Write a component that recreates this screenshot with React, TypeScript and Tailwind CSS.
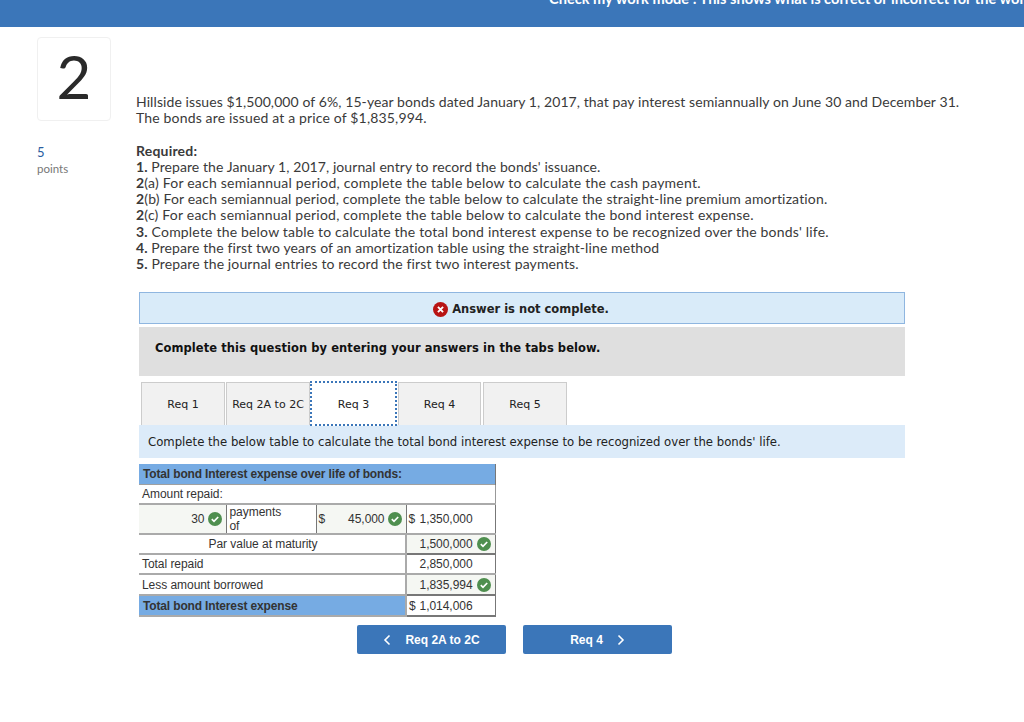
const body = "font-['Lato','Noto_Sans',sans-serif]";
const verdana = "font-['DejaVu_Sans',sans-serif]";
const arial = "font-['Liberation_Sans',Arial,sans-serif]";

const requirements = [
  { lead: "1.", text: " Prepare the January 1, 2017, journal entry to record the bonds' issuance.", track: "tracking-[0.08px]" },
  { lead: "2", text: "(a) For each semiannual period, complete the table below to calculate the cash payment.", track: "tracking-[0.22px]" },
  { lead: "2", text: "(b) For each semiannual period, complete the table below to calculate the straight-line premium amortization.", track: "tracking-[0.16px]" },
  { lead: "2", text: "(c) For each semiannual period, complete the table below to calculate the bond interest expense.", track: "tracking-[0.22px]" },
  { lead: "3.", text: " Complete the below table to calculate the total bond interest expense to be recognized over the bonds' life.", track: "tracking-[0.19px]" },
  { lead: "4.", text: " Prepare the first two years of an amortization table using the straight-line method", track: "tracking-[0.1px]" },
  { lead: "5.", text: " Prepare the journal entries to record the first two interest payments.", track: "tracking-[0.13px]" },
];

function Check() {
  return (
    <svg viewBox="0 0 14 14" className="inline-block w-[14px] h-[14px] shrink-0">
      <circle cx="7" cy="7" r="7" fill="#4f8f4f" />
      <path d="M3.8 7.2 L6 9.3 L10.2 5" fill="none" stroke="#fff" strokeWidth="1.7" />
    </svg>
  );
}

function Cross() {
  return (
    <svg viewBox="0 0 14 14" className="w-[15px] h-[15px] shrink-0">
      <circle cx="7" cy="7" r="7" fill="#b81414" />
      <path d="M4.6 4.6 L9.4 9.4 M9.4 4.6 L4.6 9.4" fill="none" stroke="#fff" strokeWidth="1.8" />
    </svg>
  );
}

function Chevron({ left }: { left?: boolean }) {
  return (
    <svg viewBox="0 0 8 12" className="w-[8px] h-[12px]">
      <path d={left ? "M6.5 1.5 L2 6 L6.5 10.5" : "M1.5 1.5 L6 6 L1.5 10.5"} fill="none" stroke="#fff" strokeWidth="1.6" />
    </svg>
  );
}

function BondTable() {
  return (
    <table className={`w-[356px] table-fixed border-collapse text-[12px] leading-[14px] tracking-[-0.05px] text-[#333] ${arial}`}>
      <colgroup>
        <col className="w-[87px]" />
        <col className="w-[90px]" />
        <col className="w-[90px]" />
        <col className="w-[89px]" />
      </colgroup>
      <tbody>
        <tr className="h-[20px] bg-[#76abe3] font-bold tracking-[-0.15px] border-b border-[#a0a0a0]">
          <td colSpan={4} className="px-1 border-r border-[#777]">Total bond Interest expense over life of bonds:</td>
        </tr>
        <tr className="h-[20px] border-b-2 border-[#aaa]">
          <td colSpan={4} className="px-[3px] border-r border-[#999]">Amount repaid:</td>
        </tr>
        <tr className="h-[30px] border-b-2 border-[#aaa]">
          <td className="bg-[#f5f7f3] border-r border-[#777] text-right pr-[4px]">
            <span className="inline-flex items-center gap-[3px]">30 <Check /></span>
          </td>
          <td className="bg-white border-r border-[#777] px-[3px]">payments<br />of</td>
          <td className="bg-[#f5f7f3] border-r border-[#777] pl-[2px]">
            <div className="flex items-center justify-between pr-[4px]">
              <span>$</span>
              <span className="inline-flex items-center gap-[3px]">45,000 <Check /></span>
            </div>
          </td>
          <td className="border-r border-[#777] pl-[2px]">
            <div className="flex justify-between pr-[22px]"><span>$</span><span>1,350,000</span></div>
          </td>
        </tr>
        <tr className="h-[20px] border-b-2 border-[#aaa]">
          <td colSpan={3} className="text-center pr-[18px] border-r-2 border-[#aaa]">Par value at maturity</td>
          <td className="bg-[#f5f7f3] border-b-2 border-[#222] border-r border-[#777] text-right pr-[4px]">
            <span className="inline-flex items-center gap-[4px]">1,500,000 <Check /></span>
          </td>
        </tr>
        <tr className="h-[20px] border-b-2 border-[#aaa]">
          <td colSpan={3} className="px-[3px] border-r-2 border-[#aaa]">Total repaid</td>
          <td className="border-r border-[#777] text-right pr-[22px]">2,850,000</td>
        </tr>
        <tr className="h-[21px] border-b-2 border-[#aaa]">
          <td colSpan={3} className="px-[3px] border-r-2 border-[#aaa]">Less amount borrowed</td>
          <td className="bg-[#f5f7f3] border-b-2 border-[#222] border-r border-[#777] text-right pr-[4px]">
            <span className="inline-flex items-center gap-[4px]">1,835,994 <Check /></span>
          </td>
        </tr>
        <tr className="h-[21px] border-b-2 border-[#aaa]">
          <td colSpan={3} className="bg-[#76abe3] font-bold tracking-[-0.15px] px-1 border-r-2 border-[#aaa]">Total bond Interest expense</td>
          <td className="border-b-2 border-[#222] border-r border-[#777] pl-[2px]">
            <div className="flex justify-between pr-[22px]"><span>$</span><span>1,014,006</span></div>
          </td>
        </tr>
      </tbody>
    </table>
  );
}

export default function App() {
  const tabBase = "bg-[#f1f1f1] border border-b-0 border-[#ccc] pt-[3px] flex items-center justify-center text-[11px] text-[#222] whitespace-nowrap";
  return (
    <div className={`w-[1024px] h-[722px] overflow-hidden bg-white text-[#3a3a3a] ${body}`}>
      <div className="h-[27px] bg-[#3b76b9] overflow-hidden pl-[549px]">
        <div className="-mt-[10px] whitespace-nowrap text-[14.6px] leading-[17px] font-bold text-white">
          Check my work mode : This shows what is correct or incorrect for the work you have completed so far.
        </div>
      </div>

      <div className="flex pl-[37px] pt-[10px]">
        <div className="w-[99px] shrink-0">
          <div className="w-[74px] h-[84px] rounded-[4px] border border-[#f0f0f0] flex items-center justify-center pb-[6px] text-[60px] text-[#2a2a2a]">
            2
          </div>
          <div className="mt-[23px] text-[13px] leading-[16px] text-[#2a5d9f]">5</div>
          <div className="mt-[1px] text-[11.5px] leading-[16px] text-[#777]">points</div>
        </div>

        <div className="pt-[57px] w-[860px]">
          <div className="text-[14px] leading-[16.3px]">
            <p className="tracking-[0.09px]">
              Hillside issues $1,500,000 of 6%, 15-year bonds dated January 1, 2017, that pay interest semiannually on June 30 and December 31.
            </p>
            <p className="tracking-[0.16px]">The bonds are issued at a price of $1,835,994.</p>
          </div>
          <div className="mt-[16px] text-[14px] leading-[16.2px]">
            <div className="font-bold tracking-[0.2px]">Required:</div>
            {requirements.map((r, i) => (
              <div key={i} className={r.track}>
                <b>{r.lead}</b>
                {r.text}
              </div>
            ))}
          </div>

          <div className={`ml-[3px] w-[766px] mt-[20px] ${verdana}`}>
            <div className="h-[32px] pt-[2px] pr-[2px] bg-[#d9ebf9] border border-[#8fb6e0] flex items-center justify-center gap-[4px] text-[11.5px] font-bold text-[#222]">
              <Cross />
              <span>Answer is not complete.</span>
            </div>
            <div className="mt-[3px] h-[49px] bg-[#dfdfdf] pl-[16px] pt-[14px] text-[11.5px] tracking-[0.07px] leading-[14px] font-bold text-[#111]">
              Complete this question by entering your answers in the tabs below.
            </div>

            <div className="flex mt-[6px] pl-[2px] h-[43px]">
              <div className={`w-[84px] ${tabBase}`}>Req 1</div>
              <div className={`w-[84px] ml-px ${tabBase}`}>Req 2A to 2C</div>
              <div className="w-[87px] h-[45px] -mt-px pt-[3px] bg-white border-2 border-dotted border-[#3b76b9] flex items-center justify-center text-[11px] text-[#222]">
                Req 3
              </div>
              <div className={`w-[83px] ml-px ${tabBase}`}>Req 4</div>
              <div className={`w-[84px] ml-[2px] ${tabBase}`}>Req 5</div>
            </div>

            <div className="h-[33px] pt-[3px] bg-[#dcebf9] pl-[9px] flex items-center text-[11.7px] text-[#222]">
              Complete the below table to calculate the total bond interest expense to be recognized over the bonds' life.
            </div>

            <div className="mt-[6px]">
              <BondTable />
            </div>

            <div className={`flex gap-[17px] mt-[8px] ml-[218px] text-[12px] font-bold text-white ${arial}`}>
              <button className="w-[149px] h-[29px] rounded-[2px] bg-[#3b76b9] flex items-center justify-center gap-[14px]">
                <Chevron left />
                Req 2A to 2C
              </button>
              <button className="w-[149px] h-[29px] rounded-[2px] bg-[#3b76b9] flex items-center justify-center gap-[14px]">
                Req 4
                <Chevron />
              </button>
            </div>
          </div>
        </div>
      </div>
    </div>
  );
}
